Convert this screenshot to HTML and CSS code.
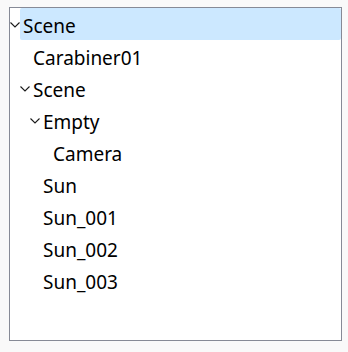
FILE: index.html
```html
<!DOCTYPE html>
<html lang="en">
<head>
    <meta charset="UTF-8">
    <title>Scene tree</title>
    <link rel="stylesheet" href="styles.css">
</head>
<body>
    <div class="tree">
        <div class="row selected">
            <span class="toggle"><svg width="10" height="6" viewBox="0 0 10 6"><polyline points="0.5,0.5 5,5 9.5,0.5"/></svg></span>
            <span class="label">Scene</span>
        </div>
        <div class="row level1">
            <span class="toggle"></span>
            <span class="label">Carabiner01</span>
        </div>
        <div class="row level1">
            <span class="toggle"><svg width="10" height="6" viewBox="0 0 10 6"><polyline points="0.5,0.5 5,5 9.5,0.5"/></svg></span>
            <span class="label">Scene</span>
        </div>
        <div class="row level2">
            <span class="toggle"><svg width="10" height="6" viewBox="0 0 10 6"><polyline points="0.5,0.5 5,5 9.5,0.5"/></svg></span>
            <span class="label">Empty</span>
        </div>
        <div class="row level3">
            <span class="toggle"></span>
            <span class="label">Camera</span>
        </div>
        <div class="row level2">
            <span class="toggle"></span>
            <span class="label">Sun</span>
        </div>
        <div class="row level2">
            <span class="toggle"></span>
            <span class="label">Sun_001</span>
        </div>
        <div class="row level2">
            <span class="toggle"></span>
            <span class="label">Sun_002</span>
        </div>
        <div class="row level2">
            <span class="toggle"></span>
            <span class="label">Sun_003</span>
        </div>
    </div>
</body>
</html>
```

FILE: styles.css
```css
body {
    margin: 0;
    background-color: #f9f9f9;
    font-family: 'Noto Sans', 'Open Sans', sans-serif;
}

.tree {
    margin: 7px 0 0 9px;
    width: 331px;
    height: 332px;
    border: 1px solid #868a96;
    background-color: #fff;
}

.row {
    display: flex;
    height: 32px;
    align-items: stretch;
}

.level1 { padding-left: 10px; }
.level2 { padding-left: 20px; }
.level3 { padding-left: 30px; }

.toggle {
    width: 10px;
    flex: none;
    display: flex;
    align-items: center;
    padding-top: 1px;
}

.toggle svg {
    flex: none;
    fill: none;
    stroke: #1a1a1a;
    stroke-width: 1.1;
}

.label {
    flex: 1;
    padding-top: 4px;
    padding-left: 3px;
    font-size: 19px;
    line-height: 28px;
    color: #000;
    border-radius: 2px;
}

.selected .label {
    background-color: #cce8ff;
}
```
